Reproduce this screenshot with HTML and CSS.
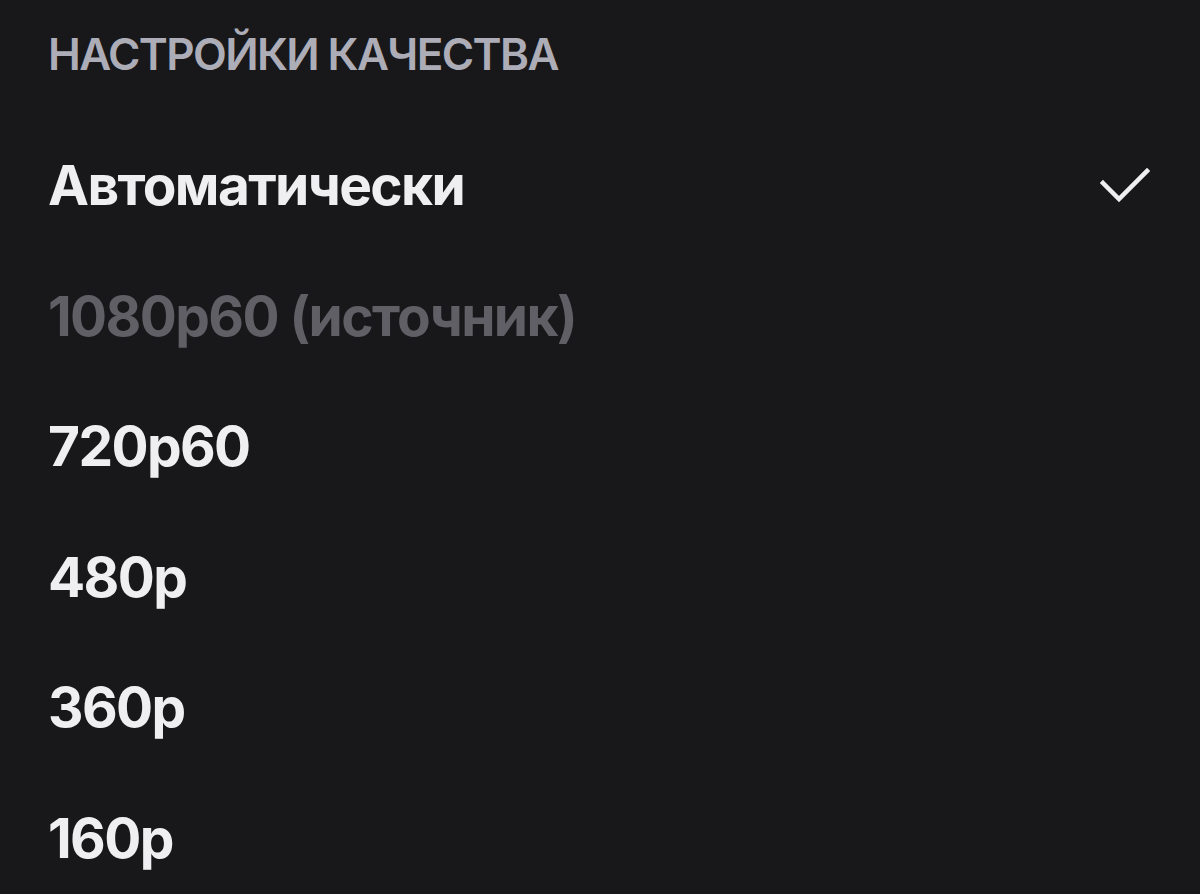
FILE: index.html
```html
<!DOCTYPE html>
<html lang="ru">
<head>
<meta charset="utf-8">
<link rel="stylesheet" href="styles.css">
</head>
<body>
<div class="panel">
  <div class="title">НАСТРОЙКИ КАЧЕСТВА</div>
  <ul class="list">
    <li class="item selected"><span>Автоматически</span>
      <svg class="check" width="50" height="36" viewBox="0 0 50 36"><path d="M3 16 L19 32 L47 4" fill="none" stroke="#efeff1" stroke-width="4.5" stroke-linecap="square"/></svg>
    </li>
    <li class="item disabled"><span>1080p60 (источник)</span></li>
    <li class="item"><span>720p60</span></li>
    <li class="item"><span>480p</span></li>
    <li class="item"><span>360p</span></li>
    <li class="item"><span>160p</span></li>
  </ul>
</div>
</body>
</html>
```
FILE: styles.css
```css
html, body {
  margin: 0;
  padding: 0;
  background: #18181b;
  width: 1200px;
  height: 894px;
  overflow: hidden;
}
.panel {
  padding: 24px 50px 0 48px;
  font-family: Inter, "Noto Sans", sans-serif;
}
.title {
  font-size: 44px;
  line-height: 60px;
  font-weight: 600;
  color: #adadb8;
  letter-spacing: -1.6px;
}
.list {
  list-style: none;
  margin: 36px 0 0 0;
  padding: 0;
}
.item {
  display: flex;
  justify-content: space-between;
  align-items: center;
  height: 130.5px;
  font-size: 55px;
  font-weight: 700;
  color: #efeff1;
  letter-spacing: -1.6px;
}
.item.disabled {
  color: #5f5f65;
}
.check {
  display: block;
}
```
